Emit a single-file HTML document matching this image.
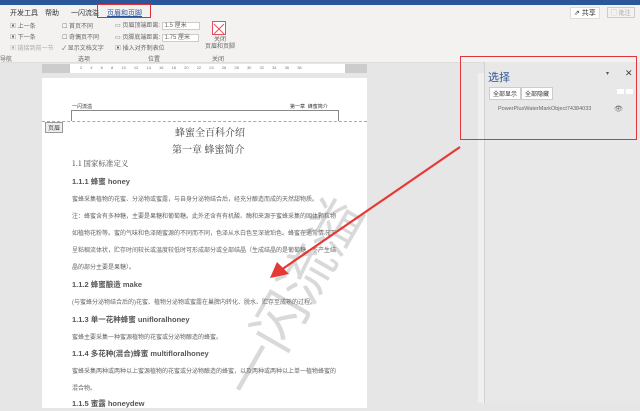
<!DOCTYPE html>
<html><head><meta charset="utf-8"><style>
*{margin:0;padding:0;box-sizing:border-box}
body{width:640px;height:403px;overflow:hidden;position:relative;background:#e6e6e6;font-family:"Liberation Sans","Noto Sans CJK SC",sans-serif;color:#444}
.a{position:absolute;white-space:nowrap}
.s{font-size:7px;color:#333}
.t{font-size:6px;color:#666}
</style></head><body>
<div class="a" style="left:0;top:0;width:640px;height:5px;background:#2b579a"></div>
<div class="a" style="left:0;top:5px;width:640px;height:58px;background:#f3f2f1"></div>
<div class="a s" style="left:10px;top:8px">开发工具</div>
<div class="a s" style="left:45px;top:8px">帮助</div>
<div class="a s" style="left:71px;top:8px">一闪流溢</div>
<div class="a" style="left:97px;top:4px;width:54px;height:14px;border:1.5px solid #d9303a"></div>
<div class="a s" style="left:107px;top:8px;color:#2b579a;text-decoration:underline">页眉和页脚</div>
<div class="a s" style="left:570px;top:7px;background:#fff;border:1px solid #ddd;padding:0 3px">⇗ 共享</div>
<div class="a t" style="left:607px;top:7px;border:1px solid #ccc;padding:0 3px;color:#aaa">▢ 批注</div>
<div class="a t" style="left:10px;top:21px">▣ 上一条</div>
<div class="a t" style="left:10px;top:32px">▣ 下一条</div>
<div class="a t" style="left:10px;top:43px;color:#aaa">▣ 链接到前一节</div>
<div class="a t" style="left:0;top:54px">导航</div>
<div class="a t" style="left:62px;top:21px">☐ 首页不同</div>
<div class="a t" style="left:62px;top:32px">☐ 奇偶页不同</div>
<div class="a t" style="left:62px;top:43px">✓ 显示文档文字</div>
<div class="a t" style="left:78px;top:54px">选项</div>
<div class="a t" style="left:115px;top:20px">▭ 页眉顶端距离: <span style="background:#fff;border:1px solid #ccc;padding:0 12px 0 2px">1.5 厘米</span></div>
<div class="a t" style="left:115px;top:32px">▭ 页脚底端距离: <span style="background:#fff;border:1px solid #ccc;padding:0 8px 0 2px">1.75 厘米</span></div>
<div class="a t" style="left:115px;top:43px">▣ 插入对齐制表位</div>
<div class="a t" style="left:148px;top:54px">位置</div>
<div class="a" style="left:212px;top:21px;width:14px;height:14px;border:1px solid #e05060;background:#fff"><svg width="12" height="12"><path d="M1 1L11 11M11 1L1 11" stroke="#e05060"/></svg></div>
<div class="a t" style="left:205px;top:37px;text-align:center;line-height:7px">关闭<br>页眉和页脚</div>
<div class="a t" style="left:212px;top:54px">关闭</div>
<div class="a" style="left:0;top:62px;width:640px;height:1px;background:#ddd"></div>
<div class="a" style="left:42px;top:64px;width:325px;height:9px;background:#fff"></div>
<div class="a" style="left:42px;top:64px;width:28px;height:9px;background:#ccc"></div>
<div class="a" style="left:345px;top:64px;width:22px;height:9px;background:#ccc"></div>
<div class="a" style="left:80px;top:65px;font-size:4px;color:#777;word-spacing:7px">2 4 6 8 10 12 14 16 18 20 22 24 26 28 30 32 34 36 38</div>
<div class="a" style="left:42px;top:78px;width:325px;height:330px;background:#fff"></div>
<div class="a" style="left:72px;top:103px;font-size:5px;color:#333">一闪流溢</div>
<div class="a" style="left:290px;top:103px;font-size:5px;color:#333">第一章 &nbsp;蜂蜜简介</div>
<div class="a" style="left:71px;top:110px;width:268px;height:11px;border:1px solid #888;border-bottom:none"></div>
<div class="a" style="left:42px;top:121px;width:325px;border-top:1px dashed #aaa"></div>
<div class="a" style="left:45px;top:122px;font-size:6px;background:#eee;border:1px solid #999;padding:0 2px">页眉</div>
<div class="a" style="left:90px;top:268px;width:220px;text-align:center;font-size:55px;line-height:55px;color:rgba(185,185,185,.55);transform:translate(90px,0) rotate(-60deg);font-family:'Noto Sans CJK SC',sans-serif">一闪流溢</div>
<div class="a" style="left:175px;top:124px;font-size:10px;color:#444;font-family:'Noto Serif CJK SC',serif">蜂蜜全百科介绍</div>
<div class="a" style="left:172px;top:141px;font-size:10px;color:#444;font-family:'Noto Serif CJK SC',serif">第一章 蜂蜜简介</div>
<div class="a" style="left:72px;top:158px;font-size:7.5px;font-family:'Noto Serif CJK SC',serif">1.1 国家标准定义</div>
<div class="a" style="left:72px;top:176px;font-size:7.5px;font-weight:bold;color:#555">1.1.1 蜂蜜 honey</div>
<div class="a t" style="left:72px;top:194px">蜜蜂采集植物的花蜜、分泌物或蜜露，与自身分泌物结合后，经充分酿造而成的天然甜物质。</div>
<div class="a t" style="left:72px;top:211px">注：蜂蜜含有多种糖，主要是果糖和葡萄糖。此外还含有有机酸、酶和来源于蜜蜂采集的固体颗粒物</div>
<div class="a t" style="left:72px;top:228px">如植物花粉等。蜜的气味和色泽随蜜源的不同而不同，色泽从水白色至深琥珀色。蜂蜜在通常情况下</div>
<div class="a t" style="left:72px;top:245px">呈粘稠流体状，贮存时间较长或温度较低时可形成部分或全部结晶（生成结晶的是葡萄糖，不产生结</div>
<div class="a t" style="left:72px;top:262px">晶的部分主要是果糖）。</div>
<div class="a" style="left:72px;top:279px;font-size:7.5px;font-weight:bold;color:#555">1.1.2 蜂蜜酿造 make</div>
<div class="a t" style="left:72px;top:297px">(与蜜蜂分泌物结合后的)花蜜、植物分泌物或蜜露在巢脾内转化、脱水、贮存至成熟的过程。</div>
<div class="a" style="left:72px;top:314px;font-size:7.5px;font-weight:bold;color:#555">1.1.3 单一花种蜂蜜 unifloralhoney</div>
<div class="a t" style="left:72px;top:332px">蜜蜂主要采集一种蜜源植物的花蜜或分泌物酿造的蜂蜜。</div>
<div class="a" style="left:72px;top:348px;font-size:7.5px;font-weight:bold;color:#555">1.1.4 多花种(混合)蜂蜜 multifloralhoney</div>
<div class="a t" style="left:72px;top:366px">蜜蜂采集两种或两种以上蜜源植物的花蜜或分泌物酿造的蜂蜜，以及两种或两种以上单一植物蜂蜜的</div>
<div class="a t" style="left:72px;top:383px">混合物。</div>
<div class="a" style="left:72px;top:398px;font-size:7.5px;font-weight:bold;color:#555">1.1.5 蜜露 honeydew</div>
<div class="a" style="left:478px;top:73px;width:6px;height:330px;background:#f0f0f0"></div>
<div class="a" style="left:484px;top:62px;width:156px;height:341px;background:#e8e8e8;border-left:1px solid #d0d0d0"></div>
<div class="a" style="left:488px;top:69px;font-size:11px;color:#2b579a">选择</div>
<div class="a" style="left:606px;top:70px;font-size:6px;color:#555">▾</div>
<div class="a" style="left:625px;top:68px;font-size:9px;color:#444">✕</div>
<div class="a t" style="left:489px;top:87px;background:#fff;border:1px solid #ccc;padding:1px 3px;color:#333">全部显示</div>
<div class="a t" style="left:521px;top:87px;background:#fff;border:1px solid #ccc;padding:1px 3px;color:#333">全部隐藏</div>
<div class="a" style="left:617px;top:89px;width:7px;height:5px;background:#fff"></div>
<div class="a" style="left:626px;top:89px;width:7px;height:5px;background:#fff"></div>
<div class="a" style="left:498px;top:106px;font-size:5.5px;color:#666">PowerPlusWaterMarkObject74384033</div>
<div class="a" style="left:614px;top:105px;font-size:7px;color:#666">👁</div>
<div class="a" style="left:460px;top:56px;width:177px;height:84px;border:1.5px solid #e0343c"></div>
<svg class="a" style="left:0;top:0" width="640" height="403"><line x1="460" y1="147" x2="281" y2="270" stroke="#e53935" stroke-width="2.2"/><path d="M270 278L277 262L289 274Z" fill="#e53935"/></svg>
</body></html>
